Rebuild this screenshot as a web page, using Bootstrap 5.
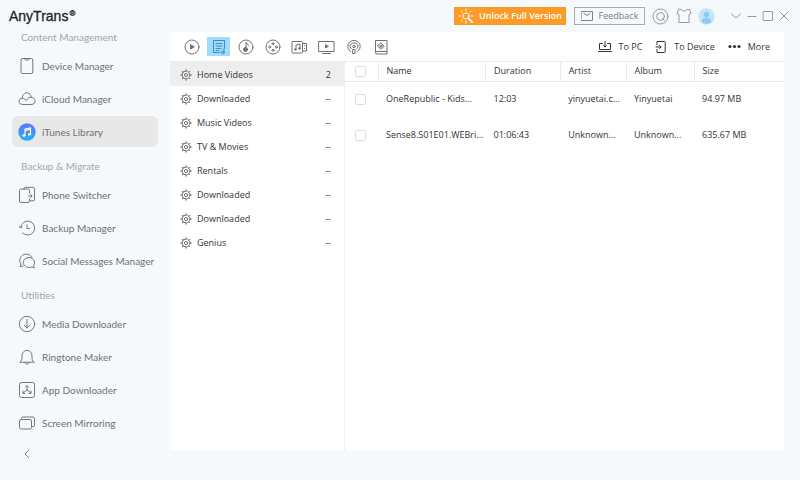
<!DOCTYPE html>
<html lang="en">
<head>
<meta charset="utf-8">
<meta name="viewport" content="width=device-width, initial-scale=1">
<title>AnyTrans</title>
<link rel="stylesheet" href="https://cdn.jsdelivr.net/npm/bootstrap@5.3.0/dist/css/bootstrap.min.css">
<style>
  body { font-family: "Open Sans", "Noto Sans", sans-serif; font-size: 9px; line-height: 12px; color: #333; background: #f5f9fc; }
  svg { fill: none; stroke: currentColor; stroke-width: 1; stroke-linecap: round; stroke-linejoin: round; flex: none; }
  .solid { stroke: none; }
  button { font-size: inherit; }
  .side { width: 170px; flex: none; padding: 6px 12px 0; font-family: Lato, "Open Sans", sans-serif; }
  .brand { font: 500 14px/20px "Liberation Sans", Arial, sans-serif; color: #222; margin-left: -3px; -webkit-text-stroke: .3px #222; }
  .brand sup { font-size: 8px; top: -5px; left: 1px; }
  .side-title { font-size: 10px; line-height: 22px; font-weight: 400; color: #a2a6a9; margin: 0 0 2px; padding-left: 9px; }
  .side-group + .side-group .side-title { margin-top: 8px; }
  .side-item { height: 31px; margin: 0 0 2px; padding: 0 0 0 6px; gap: 6px; border-radius: 6px; font-size: 10px; color: #707070; text-decoration: none; white-space: nowrap; }
  .side-item svg { width: 18px; height: 18px; color: #777; }
  .side-item.active { background: #e8e8e8; }
  .side .collapse-btn { height: 24px; margin: 4px 0 0 9px; color: #777; }
  .topbar { height: 32px; padding-right: 8px; color: #999; }
  .unlock { height: 18px; width: 112px; border: 0; background: #fc9b27; color: #fff; gap: 5px; font-weight: 600; padding: 0; white-space: nowrap; }
  .feedback { height: 18px; width: 71px; border: 1px solid #aaa; color: #808080; gap: 6px; padding: 0; margin: 0 4px 0 8px; background: transparent; }
  .plain { border: 0; background: transparent; padding: 0; display: flex; align-items: center; justify-content: center; color: inherit; }
  .topbar .round { width: 23px; }
  .topbar .win { width: 16px; }
  .winset { margin-left: 10px; }
  .panel { background: #fff; margin: 0 16px 30px 0; }
  .tools { height: 30px; border-bottom: 1px solid #ececec; padding: 0 14px 0 8px; }
  .media { width: 27px; height: 20px; color: #707070; }
  .media span { width: 23px; height: 19px; display: flex; align-items: center; justify-content: center; }
  .media.active span { background: #a2dcfb; color: #398fc5; }
  .acts { gap: 13px; }
  .tool-act { gap: 7px; color: #333; }
  .cats { width: 175px; flex: none; border-right: 1px solid #eee; }
  .cat { height: 24px; padding: 1px 13px 0 10px; color: #333; text-decoration: none; gap: 5px; }
  .cat.active { background: #eee; }
  .cat svg { color: #777; }
  .files { table-layout: fixed; width: 100%; }
  .files th { height: 19px; font-weight: 400; border-bottom: 1px solid #e9e9e9; border-right: 1px solid #ececec; padding: 0 0 0 8px; }
  .files th:last-child { border-right: 0; }
  .files td { height: 36px; padding: 0 0 0 8px; overflow: hidden; text-overflow: ellipsis; white-space: nowrap; }
  .files th:first-child, .files td:first-child { padding: 0 0 0 10px; }
  .files input { width: 11px; height: 11px; min-height: 0; margin: 0; display: block; border-color: #dcdcdc; border-radius: 3px; }
  .c-check { width: 33px; } .c-name { width: 24.5%; } .c-dur { width: 17%; } .c-artist { width: 15%; } .c-album { width: 15.5%; }
</style>
<script defer src="https://cdn.jsdelivr.net/npm/bootstrap@5.3.0/dist/js/bootstrap.bundle.min.js"></script>
</head>
<body>
<svg width="0" height="0" class="position-absolute" aria-hidden="true">
  <defs>
    <symbol id="gear" viewBox="0 0 12 12"><circle cx="6" cy="6" r="4"/><circle cx="6" cy="6" r="1.6"/><path d="M6 .6v1.400M6 10v1.400M.6 6H2M10 6h1.400M2.200 2.200l1 1M8.800 8.800l1 1M2.200 9.800l1-1M8.800 3.200l1-1"/></symbol>
  </defs>
</svg>
<div class="d-flex min-vh-100">
  <aside class="side">
    <div class="brand">AnyTrans<sup>®</sup></div>
    <nav aria-label="Main">
      <div class="side-group">
        <h2 class="side-title">Content Management</h2>
        <a href="#" class="side-item d-flex align-items-center"><svg viewBox="0 0 18 18"><path d="M4.500 1.500h8.800q1.500 0 1.500 1.500v12q0 1.500-1.500 1.500H4.500Q3 16.500 3 15V3q0-1.500 1.500-1.500zM6.500 1.800l1 1.200h3l1-1.200"/></svg>Device Manager</a>
        <a href="#" class="side-item d-flex align-items-center"><svg viewBox="0 0 18 18"><path d="M4.500 14.500C-.3 14.500-.2 8.300 4.300 8.200 4.300 1.300 13 1 13.200 7.500c5-.2 5.300 7 .3 7zM4.500 8.300c2 0 3 1 3.400 2.400M13.200 7.500c-2.300-.4-3.800.7-4.300 2.200"/></svg>iCloud Manager</a>
        <a href="#" class="side-item active d-flex align-items-center" aria-current="page"><svg viewBox="0 0 18 18"><defs><linearGradient id="tune" x1="0" y1="0" x2="0" y2="1"><stop stop-color="#5b78f6"/><stop offset="1" stop-color="#28aff8"/></linearGradient></defs><circle cx="9" cy="9" r="8.700" fill="url(#tune)" stroke="none"/><path d="M7 12.500V6l5.500-1.200v6.500M7 7.500l5.500-1.200" stroke="#fff" stroke-width="1.200"/><ellipse cx="5.900" cy="12.500" rx="1.500" ry="1.200" fill="#fff" stroke="none"/><ellipse cx="11.400" cy="11.400" rx="1.500" ry="1.200" fill="#fff" stroke="none"/></svg>iTunes Library</a>
      </div>
      <div class="side-group">
        <h2 class="side-title">Backup &amp; Migrate</h2>
        <a href="#" class="side-item d-flex align-items-center"><svg viewBox="0 0 18 18"><path d="M6 3H3Q1.500 3 1.500 4.500V15q0 1.500 1.500 1.500h7q1.500 0 1.500-1.500M6 3V2.500Q6 1.300 7.500 1.300H15q1.500 0 1.500 1.500v10.500q0 1.500-1.500 1.500h-3.500V13M6 3h4q1.500 0 1.500 1.500V7M10.500 10h3.500M12.700 8.700L14 10l-1.300 1.300"/></svg>Phone Switcher</a>
        <a href="#" class="side-item d-flex align-items-center"><svg viewBox="0 0 18 18"><path d="M2.700 8.500a7 7 0 1 1 2 5.500M1.500 7.500l1.200 1.500 1.500-1.200M9 5.800v3.700h2.500"/></svg>Backup Manager</a>
        <a href="#" class="side-item d-flex align-items-center"><svg viewBox="0 0 18 18"><path d="M3 12.200C-1 6.800 4.500.9 9.800 2.300c2 .5 3.300 1.700 4 3M3 12.200l-1 2.600 3.200-.8"/><path d="M15.600 14c2.400-3.400.5-8.500-4.500-8.500-8 0-7.300 10-.1 10 1.200 0 2-.2 2.900-.6l2.300.8z"/></svg>Social Messages Manager</a>
      </div>
      <div class="side-group">
        <h2 class="side-title">Utilities</h2>
        <a href="#" class="side-item d-flex align-items-center"><svg viewBox="0 0 18 18"><circle cx="9" cy="9" r="7.700"/><path d="M9 4.500v8.500M6.300 10.400L9 13l2.700-2.600"/></svg>Media Downloader</a>
        <a href="#" class="side-item d-flex align-items-center"><svg viewBox="0 0 18 18"><path d="M2 14c2-1.500 2-2.500 2-6 0-7.500 10-7.500 10 0 0 3.500 0 4.500 2 6zM7 14.500c.3 2.400 3.700 2.400 4 0"/></svg>Ringtone Maker</a>
        <a href="#" class="side-item d-flex align-items-center"><svg viewBox="0 0 18 18"><rect x="1.500" y="1.500" width="15" height="15" rx="2"/><path d="M9 5v4l-4 3M9 9l4 3M7.500 6L9 4.500 10.500 6M5 10v2.300l2 .2M13 10v2.300l-2 .2"/></svg>App Downloader</a>
        <a href="#" class="side-item d-flex align-items-center"><svg viewBox="0 0 18 18"><rect x="1.500" y="5.500" width="12" height="9.500" rx="1.500"/><path d="M3.500 5V4.500Q3.500 3 5 3h10q1.500 0 1.500 1.500V11q0 1.500-1.500 1.500h-1"/></svg>Screen Mirroring</a>
      </div>
    </nav>
    <button class="plain collapse-btn" aria-label="Collapse sidebar"><svg width="12" height="12" viewBox="0 0 12 12"><path d="M7.500 2.500L4 6l3.500 3.500"/></svg></button>
  </aside>

  <div class="flex-grow-1 d-flex flex-column">
    <header class="topbar d-flex align-items-center justify-content-end">
      <button class="unlock d-flex align-items-center justify-content-center"><svg width="16" height="16" viewBox="0 0 16 16"><circle cx="8" cy="8" r="3"/><path stroke-width="1.800" d="M10.500 10.500L14 14"/><path d="M8 1v2M8 13v2M1 8h2M13 8h2M3 3l1.200 1.200M13 3l-1.200 1.200M3 13l1.200-1.200"/></svg>Unlock Full Version</button>
      <button class="feedback d-flex align-items-center justify-content-center"><svg width="12" height="10" viewBox="0 0 12 10"><rect x=".5" y=".5" width="11" height="9"/><path d="M3 2.500l3 2 3-2"/></svg>Feedback</button>
      <button class="plain round" aria-label="Search"><svg width="17" height="17" viewBox="0 0 17 17"><circle cx="8.500" cy="8.500" r="7.500"/><circle cx="8.500" cy="8.500" r="3.800"/><path d="M10.500 10.500l2 2"/></svg></button>
      <button class="plain round" aria-label="Skins"><svg width="16" height="16" viewBox="0 0 16 16"><path d="M5 1.500c.7 2 5.300 2 6 0h2.500L15 5.500l-2 1.200v7.800H3V6.700L1 5.500l1.500-4z"/></svg></button>
      <button class="plain round" aria-label="Account"><svg class="solid" width="17" height="17" viewBox="0 0 17 17"><circle cx="8.500" cy="8.500" r="8.200" fill="#c3e4fa"/><circle cx="8.500" cy="6.500" r="2.700" fill="#8cc9f3"/><path d="M3.500 13.500c.5-5 9.500-5 10 0-2 3-8 3-10 0z" fill="#8cc9f3"/></svg></button>
      <div class="winset d-flex">
        <button class="plain win" aria-label="Menu"><svg width="12" height="12" viewBox="0 0 12 12"><path d="M1.500 4L6 8l4.500-4"/></svg></button>
        <button class="plain win" aria-label="Minimize"><svg width="12" height="12" viewBox="0 0 12 12"><path d="M2 6.500h8"/></svg></button>
        <button class="plain win" aria-label="Maximize"><svg width="12" height="12" viewBox="0 0 12 12"><path d="M1.500 1.500h9v9h-9z"/></svg></button>
        <button class="plain win" aria-label="Close"><svg width="12" height="12" viewBox="0 0 12 12"><path d="M2 2l8 8M10 2l-8 8"/></svg></button>
      </div>
    </header>

    <main class="panel flex-grow-1 d-flex flex-column">
      <div class="tools d-flex align-items-center">
        <button class="plain media" aria-label="Music"><span><svg width="16" height="16" viewBox="0 0 16 16"><circle cx="8" cy="8" r="7"/><path d="M6.500 6v4l3.500-2z" fill="currentColor"/></svg></span></button>
        <button class="plain media active" aria-label="Playlists"><span><svg width="16" height="16" viewBox="0 0 16 16"><path d="M13.500 9V1.500h-11v12H9M5 7h6M5 9.500h5M5 4.500h6M5 11.500h3M13 9.500v4.500"/><circle cx="11.700" cy="13.500" r="1.400"/></svg></span></button>
        <button class="plain media" aria-label="Albums"><span><svg width="16" height="16" viewBox="0 0 16 16"><circle cx="8" cy="8" r="7"/><path d="M8 9.500V3.500l2.500 3"/><circle cx="7.500" cy="10.500" r="2" fill="currentColor"/></svg></span></button>
        <button class="plain media" aria-label="Movies"><span><svg width="16" height="16" viewBox="0 0 16 16"><circle cx="8" cy="8" r="7"/><circle cx="8" cy="4.700" r="1"/><circle cx="8" cy="11.300" r="1"/><circle cx="4.700" cy="8" r="1"/><circle cx="11.300" cy="8" r="1"/></svg></span></button>
        <button class="plain media" aria-label="Music videos"><span><svg width="17" height="16" viewBox="0 0 17 16"><rect x="1" y="2.500" width="10.500" height="11.500" rx="1"/><path d="M11.500 4.500h4V12h-4M13.500 6.500v.2M13.500 9.500v.2M5 10.500V6l4-1v4.500"/><circle cx="4.400" cy="10.500" r=".8" fill="currentColor"/><circle cx="8.400" cy="9.500" r=".8" fill="currentColor"/></svg></span></button>
        <button class="plain media" aria-label="TV shows"><span><svg width="17" height="16" viewBox="0 0 17 16"><rect x="1" y="2.500" width="15" height="10"/><path d="M4.500 14.500h8"/><path d="M7.500 6v3l2.500-1.500z" fill="currentColor"/></svg></span></button>
        <button class="plain media" aria-label="Podcasts"><span><svg width="16" height="16" viewBox="0 0 16 16"><path d="M4.500 12.500C-1 8.500 2.500 1.500 8 1.500s9 7 3.500 11M5.300 9.800C2.500 7.500 4.500 4 8 4s5.500 3.500 2.700 5.800"/><circle cx="8" cy="7.500" r="1.300"/><path d="M7 10.500h2v4H7z"/></svg></span></button>
        <button class="plain media" aria-label="Audiobooks"><span><svg width="16" height="16" viewBox="0 0 16 16"><path d="M2.500 13V1.500h11.500v13.500h-10q-1.500 0-1.500-1.300t1.500-1.200h10"/><path d="M8 4l3.200 3.200L8 10.400 4.800 7.200z"/><path d="M7 6.500v1.400M9 6.500v1.400M8 5.800v2.800"/></svg></span></button>
        <div class="acts d-flex ms-auto">
          <button class="plain tool-act"><svg width="14" height="12" viewBox="0 0 14 12"><path d="M4.500 2.500h-3v6h11v-6h-3M.5 10.500h13M7 .7V6M5.500 4.500L7 6l1.500-1.500"/></svg>To PC</button>
          <button class="plain tool-act"><svg width="12" height="14" viewBox="0 0 12 14"><path d="M2 4.500V1.500h7.500q.7 0 .7.700v9.600q0 .7-.7.700H2V9.500M1 7h5M4.500 5.500L6 7 4.500 8.500"/></svg>To Device</button>
          <button class="plain tool-act"><svg class="solid" width="13" height="5" viewBox="0 0 13 5"><g fill="currentColor"><circle cx="2" cy="2.500" r="1.600"/><circle cx="6.500" cy="2.500" r="1.600"/><circle cx="11" cy="2.500" r="1.600"/></g></svg>More</button>
        </div>
      </div>
      <div class="flex-grow-1 d-flex">
        <nav class="cats" aria-label="Categories">
          <a href="#" class="cat active d-flex align-items-center"><svg width="12" height="12"><use href="#gear"/></svg>Home Videos<span class="ms-auto">2</span></a>
          <a href="#" class="cat d-flex align-items-center"><svg width="12" height="12"><use href="#gear"/></svg>Downloaded<span class="ms-auto">--</span></a>
          <a href="#" class="cat d-flex align-items-center"><svg width="12" height="12"><use href="#gear"/></svg>Music Videos<span class="ms-auto">--</span></a>
          <a href="#" class="cat d-flex align-items-center"><svg width="12" height="12"><use href="#gear"/></svg>TV &amp; Movies<span class="ms-auto">--</span></a>
          <a href="#" class="cat d-flex align-items-center"><svg width="12" height="12"><use href="#gear"/></svg>Rentals<span class="ms-auto">--</span></a>
          <a href="#" class="cat d-flex align-items-center"><svg width="12" height="12"><use href="#gear"/></svg>Downloaded<span class="ms-auto">--</span></a>
          <a href="#" class="cat d-flex align-items-center"><svg width="12" height="12"><use href="#gear"/></svg>Downloaded<span class="ms-auto">--</span></a>
          <a href="#" class="cat d-flex align-items-center"><svg width="12" height="12"><use href="#gear"/></svg>Genius<span class="ms-auto">--</span></a>
        </nav>
        <div class="flex-grow-1">
          <table class="files">
            <thead><tr>
              <th class="c-check"><input type="checkbox" class="form-check-input" aria-label="Select all"></th>
              <th class="c-name">Name</th><th class="c-dur">Duration</th><th class="c-artist">Artist</th><th class="c-album">Album</th><th>Size</th>
            </tr></thead>
            <tbody>
              <tr><td><input type="checkbox" class="form-check-input" aria-label="Select OneRepublic - Kids"></td><td>OneRepublic - Kids...</td><td>12:03</td><td>yinyuetai.c...</td><td>Yinyuetai</td><td>94.97 MB</td></tr>
              <tr><td><input type="checkbox" class="form-check-input" aria-label="Select Sense8.S01E01"></td><td>Sense8.S01E01.WEBri...</td><td>01:06:43</td><td>Unknown...</td><td>Unknown...</td><td>635.67 MB</td></tr>
            </tbody>
          </table>
        </div>
      </div>
    </main>
  </div>
</div>
</body>
</html>
